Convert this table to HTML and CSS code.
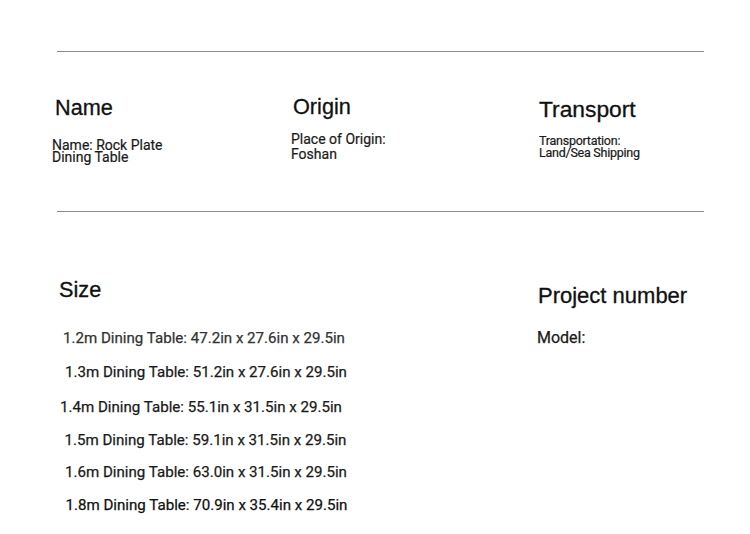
FILE: index.html
```html
<!DOCTYPE html>
<html lang="en">
<head>
<meta charset="utf-8">
<title>Rock Plate Dining Table</title>
<link rel="stylesheet" href="styles.css">
</head>
<body>
<div class="page">
  <div class="rule"></div>
  <section class="specs">
    <div class="spec spec-name">
      <h2 class="heading">Name</h2>
      <p class="spec-text">Name: Rock Plate<br>Dining Table</p>
    </div>
    <div class="spec spec-origin">
      <h2 class="heading">Origin</h2>
      <p class="spec-text">Place of Origin:<br>Foshan</p>
    </div>
    <div class="spec spec-transport">
      <h2 class="heading">Transport</h2>
      <p class="spec-text">Transportation:<br>Land/Sea Shipping</p>
    </div>
  </section>
  <div class="rule"></div>
  <section class="details">
    <div class="sizes">
      <h2 class="heading heading-size">Size</h2>
      <ul class="size-list">
        <li class="size r1">1.2m Dining Table: 47.2in x 27.6in x 29.5in</li>
        <li class="size r2">1.3m Dining Table: 51.2in x 27.6in x 29.5in</li>
        <li class="size r3">1.4m Dining Table: 55.1in x 31.5in x 29.5in</li>
        <li class="size r4">1.5m Dining Table: 59.1in x 31.5in x 29.5in</li>
        <li class="size r5">1.6m Dining Table: 63.0in x 31.5in x 29.5in</li>
        <li class="size r6">1.8m Dining Table: 70.9in x 35.4in x 29.5in</li>
      </ul>
    </div>
    <div class="project">
      <h2 class="heading heading-project">Project number</h2>
      <p class="model">Model:</p>
    </div>
  </section>
</div>
</body>
</html>
```

FILE: styles.css
```css
html, body {
  margin: 0;
  padding: 0;
  background: #ffffff;
}

body {
  font-family: Roboto, "Liberation Sans", Arial, sans-serif;
  color: #1a1a1a;
}

.page {
  width: 750px;
  height: 534px;
  padding-top: 51px;
  box-sizing: border-box;
  overflow: hidden;
}

.rule {
  margin-left: 57px;
  width: 647px;
  height: 1px;
  background: #8c8c8c;
}

.heading {
  margin: 0;
  font-family: "Liberation Sans", Arial, sans-serif;
  font-weight: normal;
  font-size: 21.7px;
  line-height: 24px;
  color: #111111;
  -webkit-text-stroke: 0.3px #111111;
}

/* ---- top specs ---- */
.specs {
  display: grid;
  grid-template-columns: 239px 248px 1fr;
  padding-left: 52px;
  padding-top: 43px;
  height: 159px;
  box-sizing: border-box;
}

.spec-text {
  margin: 0;
  font-size: 14px;
  color: #1a1a1a;
  -webkit-text-stroke: 0.2px #1a1a1a;
}

.spec-name .heading {
  margin-top: 1px;
  margin-left: 3px;
}
.spec-name .spec-text {
  margin-top: 19px;
  line-height: 12px;
}

.spec-origin .heading {
  margin-left: 2px;
}
.spec-origin .spec-text {
  margin-top: 13px;
  line-height: 15px;
}

.spec-transport .heading {
  margin-top: 2px;
  font-size: 22.8px;
}
.spec-transport .spec-text {
  margin-top: 14px;
  font-size: 12.5px;
  line-height: 11.5px;
  letter-spacing: -0.25px;
}

/* ---- bottom details ---- */
.details {
  display: grid;
  grid-template-columns: 485px 1fr;
  padding-left: 52px;
}

.heading-size {
  margin-top: 66px;
  margin-left: 7px;
}

.size-list {
  list-style: none;
  margin: 26px 0 0;
  padding: 0;
  display: flex;
  flex-direction: column;
}

.size {
  font-size: 15.1px;
  line-height: 20px;
  color: #1a1a1a;
  -webkit-text-stroke: 0.25px #1a1a1a;
}

.r1 { margin-left: 11px; color: #333333; -webkit-text-stroke-color: #333333; }
.r2 { margin-left: 13px; margin-top: 14.4px; }
.r3 { margin-left: 8px; margin-top: 14.6px; }
.r4 { margin-left: 12.5px; margin-top: 12.7px; }
.r5 { margin-left: 13px; margin-top: 12.3px; }
.r6 { margin-left: 13.5px; margin-top: 13.4px; color: #0d0d0d; }

.heading-project {
  margin-top: 71.5px;
  margin-left: 1px;
  font-size: 22px;
}

.model {
  margin: 20px 0 0;
  font-size: 16px;
  line-height: 20px;
  color: #1a1a1a;
  -webkit-text-stroke: 0.25px #1a1a1a;
}
```
